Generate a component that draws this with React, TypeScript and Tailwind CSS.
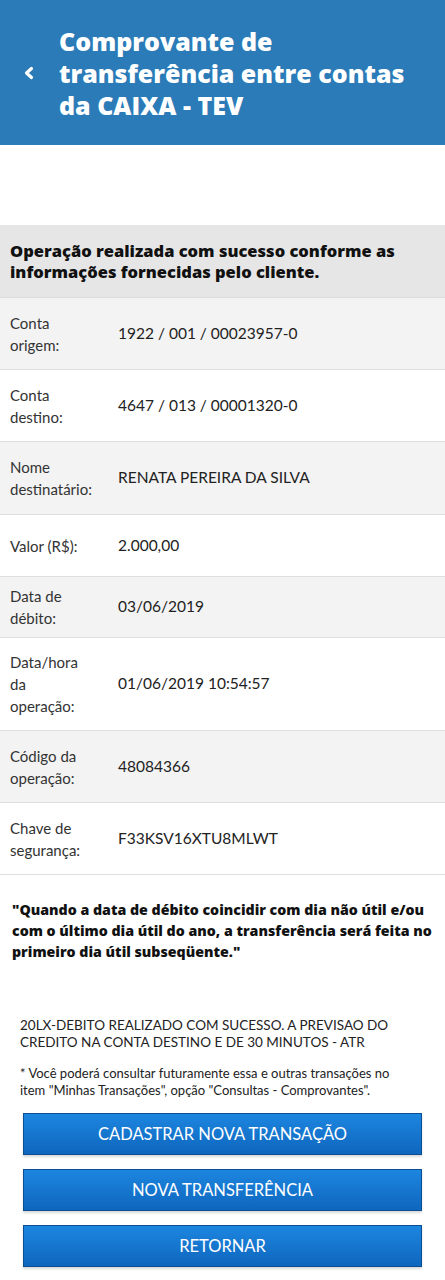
import React from "react";

const rows: { label: string[]; value: string; bg: string; h: string }[] = [
  { label: ["Conta", "origem:"], value: "1922 / 001 / 00023957-0", bg: "bg-[#f4f3f3]", h: "h-[72px]" },
  { label: ["Conta", "destino:"], value: "4647 / 013 / 00001320-0", bg: "bg-white", h: "h-[72px]" },
  { label: ["Nome", "destinatário:"], value: "RENATA PEREIRA DA SILVA", bg: "bg-[#f4f3f3]", h: "h-[73px]" },
  { label: ["Valor (R$):"], value: "2.000,00", bg: "bg-white", h: "h-[62px]" },
  { label: ["Data de", "débito:"], value: "03/06/2019", bg: "bg-[#f4f3f3]", h: "h-[61px]" },
  { label: ["Data/hora", "da", "operação:"], value: "01/06/2019 10:54:57", bg: "bg-white", h: "h-[93px]" },
  { label: ["Código da", "operação:"], value: "48084366", bg: "bg-[#f4f3f3]", h: "h-[72px]" },
  { label: ["Chave de", "segurança:"], value: "F33KSV16XTU8MLWT", bg: "bg-white", h: "h-[72px]" },
];

const font = { fontFamily: "Lato, 'Open Sans', sans-serif" };
const bold = { fontFamily: "'Open Sans', Lato, sans-serif" };

export default function App() {
  return (
    <div className="w-[445px] min-h-[1280px] bg-white text-[#222]" style={font}>
      <header className="h-[145px] bg-[#2a7bb7] flex items-center pl-[22px] pr-2">
        <svg width="14" height="14" viewBox="0 0 14 14" className="mr-[23px] shrink-0">
          <path d="M9.5 2.5 L4.5 7 L9.5 11.5" stroke="white" strokeWidth="3.2" fill="none" strokeLinecap="round" strokeLinejoin="round" />
        </svg>
        <h1 className="text-white font-extrabold text-[25px] leading-[32px] whitespace-nowrap" style={bold}>
          Comprovante de<br />transferência entre contas<br />da CAIXA - TEV
        </h1>
      </header>
      <div className="h-[80px]" />
      <div className="bg-[#e6e6e6] h-[73px] flex items-center pl-[10px] pr-[4px] border-b border-[#dcdcdc]">
        <p className="font-extrabold text-[16.5px] leading-[21px] text-[#111] whitespace-nowrap" style={bold}>
          Operação realizada com sucesso conforme as<br />informações fornecidas pelo cliente.
        </p>
      </div>
      {rows.map((r, i) => (
        <div key={i} className={`${r.bg} ${r.h} flex items-center border-b border-[#dedede]`}>
          <div className="w-[118px] pl-[10px] text-[15px] leading-[22px] text-[#333]">
            {r.label.map((l, j) => (
              <div key={j}>{l}</div>
            ))}
          </div>
          <div className="text-[15.5px] text-[#222]">{r.value}</div>
        </div>
      ))}
      <p className="mt-[24px] pl-[12px] pr-[4px] font-extrabold text-[14.2px] leading-[21px] text-[#111] whitespace-nowrap" style={bold}>
        "Quando a data de débito coincidir com dia não útil e/ou<br />com o último dia útil do ano, a transferência será feita no<br />primeiro dia útil subseqüente."
      </p>
      <p className="mt-[55px] px-[20px] text-[13.5px] leading-[17px] text-[#222]">
        20LX-DEBITO REALIZADO COM SUCESSO. A PREVISAO DO<br />CREDITO NA CONTA DESTINO E DE 30 MINUTOS - ATR
      </p>
      <p className="mt-[14px] px-[20px] text-[13px] leading-[17px] text-[#222] whitespace-nowrap">
        * Você poderá consultar futuramente essa e outras transações no<br />item "Minhas Transações", opção "Consultas - Comprovantes".
      </p>
      <div className="mt-[14px] px-[23px] flex flex-col gap-[14px]">
        {["CADASTRAR NOVA TRANSAÇÃO", "NOVA TRANSFERÊNCIA", "RETORNAR"].map((t) => (
          <button
            key={t}
            className="h-[42px] w-full bg-gradient-to-b from-[#1d86e0] to-[#0e66bd] border border-[#0b4f93] text-white text-[16.5px] shadow-[0_2px_2px_rgba(0,0,0,0.15)]"
          >
            {t}
          </button>
        ))}
      </div>
    </div>
  );
}
